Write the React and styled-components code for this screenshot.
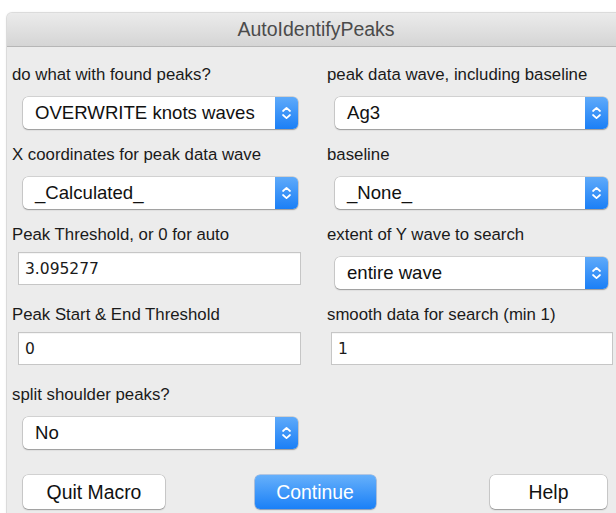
import React from "react";
import styled, { createGlobalStyle } from "styled-components";

const GlobalStyle = createGlobalStyle`
  html, body {
    margin: 0;
    background: #ffffff;
    overflow: hidden;
  }
  * {
    box-sizing: border-box;
  }
`;

const Window = styled.div`
  margin: 13px 0 0 7px;
  width: 618px;
  min-height: 520px;
  background: #ececec;
  border-radius: 5px 5px 0 0;
  box-shadow: 0 0 0 1px rgba(0, 0, 0, 0.1), 0 0 3px rgba(0, 0, 0, 0.12);
  font-family: "Liberation Sans", Arial, sans-serif;
  overflow: hidden;
`;

const TitleBar = styled.div`
  height: 34px;
  display: flex;
  align-items: center;
  justify-content: center;
  background: linear-gradient(#ebebeb, #d5d5d5);
  border-bottom: 1px solid #b6b6b6;
  color: #4b4b4b;
  font-size: 19.5px;
`;

const Body = styled.div`
  padding: 18px 0 0 5px;
`;

const Form = styled.div`
  display: grid;
  grid-template-columns: 315px 1fr;
  row-gap: 16px;
`;

const Field = styled.div`
  display: flex;
  flex-direction: column;
  align-items: flex-start;
  margin-top: ${(p) => p.$push || 0}px;
`;

const Label = styled.div`
  font-size: 16.8px;
  line-height: 20px;
  color: #1a1a1a;
`;

const PopupBox = styled.div`
  display: flex;
  margin: 12px 0 0 ${(p) => (p.$right ? 8 : 11)}px;
  width: ${(p) => (p.$right ? 273 : 275)}px;
  height: 32px;
  background: #ffffff;
  border-radius: 5px;
  box-shadow: 0 0 0 0.5px rgba(0, 0, 0, 0.22), 0 1px 1.5px rgba(0, 0, 0, 0.28);
`;

const PopupText = styled.div`
  flex: 1;
  display: flex;
  align-items: center;
  padding-left: 12px;
  font-size: 18.6px;
  color: #111111;
`;

const Stepper = styled.div`
  width: 23px;
  display: flex;
  align-items: center;
  justify-content: center;
  border-radius: 0 5px 5px 0;
  background: linear-gradient(#5eaafa, #1b7ff6);
`;

const TextBox = styled.div`
  display: flex;
  align-items: center;
  margin: 7px 0 0 ${(p) => (p.$right ? 4 : 6)}px;
  width: ${(p) => (p.$right ? 282 : 283)}px;
  height: 33px;
  padding-left: 6px;
  background: #ffffff;
  border: 1px solid #c6c6c6;
  box-shadow: inset 0 1px 0 rgba(0, 0, 0, 0.04);
  font-family: "DejaVu Sans", sans-serif;
  font-size: 15.5px;
  color: #1a1a1a;
`;

const ButtonRow = styled.div`
  display: grid;
  grid-template-columns: 1fr auto 1fr;
  align-items: center;
  margin-top: 26px;
  padding: 0 18px 0 11px;
`;

const Button = styled.div`
  justify-self: ${(p) => p.$align};
  width: ${(p) => p.$width}px;
  height: 34px;
  display: flex;
  align-items: center;
  justify-content: center;
  border-radius: 5px;
  font-size: 19.4px;
  color: ${(p) => (p.$primary ? "#ffffff" : "#111111")};
  background: ${(p) =>
    p.$primary ? "linear-gradient(#66b0fb, #1a80f7)" : "#ffffff"};
  box-shadow: ${(p) =>
    p.$primary
      ? "0 0 0 0.5px rgba(10, 90, 200, 0.5), 0 1px 1.5px rgba(0, 0, 0, 0.25)"
      : "0 0 0 0.5px rgba(0, 0, 0, 0.22), 0 1px 1.5px rgba(0, 0, 0, 0.28)"};
`;

function Chevrons() {
  return (
    <svg width="11" height="18" viewBox="0 0 11 18">
      <path
        d="M2 7 L5.5 3.8 L9 7 M2 11 L5.5 14.2 L9 11"
        fill="none"
        stroke="#ffffff"
        strokeWidth="1.7"
        strokeLinecap="round"
        strokeLinejoin="round"
      />
    </svg>
  );
}

function Popup({ value, right }) {
  return (
    <PopupBox $right={right}>
      <PopupText>{value}</PopupText>
      <Stepper>
        <Chevrons />
      </Stepper>
    </PopupBox>
  );
}

export default function App() {
  return (
    <>
      <GlobalStyle />
      <Window>
        <TitleBar>AutoIdentifyPeaks</TitleBar>
        <Body>
          <Form>
            <Field>
              <Label>do what with found peaks?</Label>
              <Popup value="OVERWRITE knots waves" />
            </Field>
            <Field>
              <Label>peak data wave, including baseline</Label>
              <Popup value="Ag3" right />
            </Field>

            <Field>
              <Label>X coordinates for peak data wave</Label>
              <Popup value="_Calculated_" />
            </Field>
            <Field>
              <Label>baseline</Label>
              <Popup value="_None_" right />
            </Field>

            <Field>
              <Label>Peak Threshold, or 0 for auto</Label>
              <TextBox>3.095277</TextBox>
            </Field>
            <Field>
              <Label>extent of Y wave to search</Label>
              <Popup value="entire wave" right />
            </Field>

            <Field>
              <Label>Peak Start &amp; End Threshold</Label>
              <TextBox>0</TextBox>
            </Field>
            <Field>
              <Label>smooth data for search (min 1)</Label>
              <TextBox $right>1</TextBox>
            </Field>

            <Field $push={4}>
              <Label>split shoulder peaks?</Label>
              <Popup value="No" />
            </Field>
          </Form>

          <ButtonRow>
            <Button $align="start" $width={142}>
              Quit Macro
            </Button>
            <Button $align="center" $width={121} $primary>
              Continue
            </Button>
            <Button $align="end" $width={117}>
              Help
            </Button>
          </ButtonRow>
        </Body>
      </Window>
    </>
  );
}
